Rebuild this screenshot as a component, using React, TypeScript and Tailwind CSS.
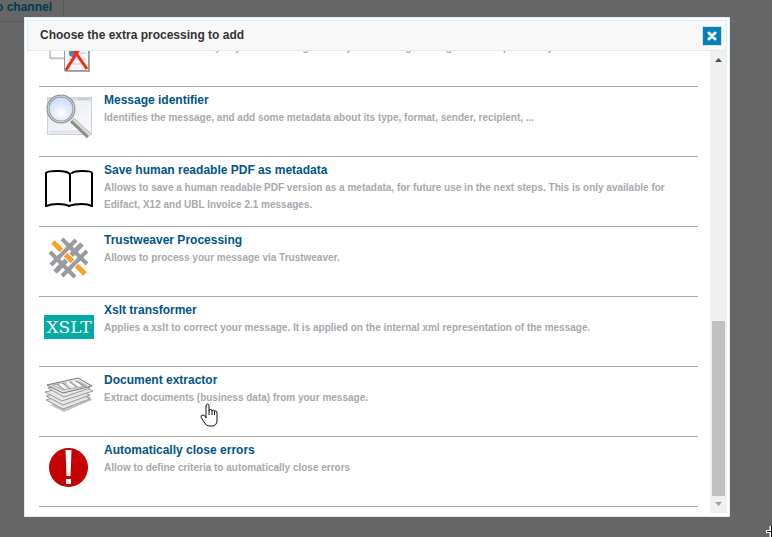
import type { ReactNode } from 'react';

type Item = { id: string; title?: string; text: string; icon: ReactNode };

const RemoveIcon = () => (
  <svg width="50" height="50" viewBox="0 0 50 50" aria-hidden="true">
    <rect x="6" y="8" width="26" height="28" fill="#fff" stroke="#999" />
    <path d="M6 37h14" stroke="#ccc" />
    <rect x="21" y="18" width="25" height="32" fill="#aaa" />
    <rect x="20.500" y="17.500" width="24" height="31" fill="#f8f8fc" stroke="#999" />
    <circle cx="29" cy="31" r="4" fill="#4f81b5" />
    <path d="M36 31h6M25 37h16M25 42h16" stroke="#b8c8dd" />
    <path d="M23 18L43 47M41 18L22 48" stroke="#f82a0c" strokeWidth="3" />
  </svg>
);

const MagnifierIcon = () => (
  <svg width="50" height="50" viewBox="0 0 50 50" aria-hidden="true">
    <defs>
      <radialGradient id="lens" cx="50%" cy="65%">
        <stop offset="0" stopColor="#ffffff" />
        <stop offset="1" stopColor="#cfdffb" />
      </radialGradient>
      <linearGradient id="pane" x2="1" y2="1">
        <stop offset="0" stopColor="#e3e8ed" />
        <stop offset="1" stopColor="#fafbfc" />
      </linearGradient>
    </defs>
    <rect x="3.500" y="5.500" width="44" height="37" fill="url(#pane)" stroke="#cbd1d6" />
    <path d="M4 7h43" stroke="#d3dae2" strokeWidth="3" />
    <path d="M34 7h12" stroke="#a8b4c2" strokeDasharray="3 1" />
    <path d="M5 40h41" stroke="#dfe4e8" strokeWidth="3" />
    <path d="M28 28L45 44" stroke="#8d8d8d" strokeWidth="6" />
    <path d="M29 27L46 43" stroke="#d8d8d8" strokeWidth="3" />
    <circle cx="17" cy="17" r="13" fill="url(#lens)" stroke="#929292" strokeWidth="3" />
    <circle cx="17" cy="17" r="13" fill="none" stroke="#d8d8d8" />
  </svg>
);

const BookIcon = () => (
  <svg width="50" height="50" viewBox="0 0 50 50" fill="none" stroke="#000" strokeWidth="2" strokeLinecap="round" strokeLinejoin="round" aria-hidden="true">
    <path d="M2 44V11Q3 9 14 9Q23 9 26 12V39M28 11Q30 9 38 9Q48 9 48 11V44" />
    <path d="M2 44Q7 42 14 42Q21 42 25 44Q30 42 38 42Q44 42 48 44" />
  </svg>
);

const WeaveIcon = () => (
  <svg width="50" height="50" viewBox="0 0 50 50" fill="none" strokeWidth="4" aria-hidden="true">
    <g stroke="#999b9f">
      <path d="M18 7L43 32M6 20L31 45" />
      <path d="M32 8L7 33M43 19L18 44" />
    </g>
    <path d="M38 12L11 40" stroke="#999b9f" strokeWidth="5" />
    <path d="M18 19L31 32" stroke="#fff" strokeWidth="7" />
    <path d="M9 10L41 42" stroke="#fb9f26" strokeWidth="5" />
    <path d="M16 24L23 17M27 35L34 28" stroke="#fff" strokeWidth="6" />
    <path d="M14 26L25 15M25 37L36 26" stroke="#999b9f" strokeWidth="4" />
    <path d="M27 16L33 22M15 29L20 34" stroke="#999b9f" strokeWidth="4" />
  </svg>
);

const XsltIcon = () => (
  <div className="flex h-6 w-[50px] items-center justify-center overflow-hidden bg-[#02aba3] font-['DejaVu_Serif',serif] text-[17px] leading-6 text-white">
    XSLT
  </div>
);

const PapersIcon = () => (
  <svg width="50" height="50" viewBox="0 0 50 50" strokeLinejoin="round" aria-hidden="true">
    <path d="M6 33L20 40L48 28L44 22Z" fill="#c5c5c5" />
    <g fill="#e6e6e6" stroke="#999">
      <path d="M2 28L19 37L46 27L33 19Z" />
      <path d="M2 24L19 33L46 23L32 16Z" />
      <path d="M1 20L18 29L49 19L34 12Z" />
      <path d="M4 16L20 25L46 16L34 9Z" />
      <path d="M3 13L19 21L48 14L34 6Z" stroke="#777" />
    </g>
    <path d="M8 13L19 18L43 14L33 9Z" fill="#dcdcdc" stroke="#aaa" />
    <path d="M13 12l8 6M19 11l7 6M26 10l7 5M32 9l8 5" stroke="#888" fill="none" />
    <path d="M16 12l6 5M23 10l6 5M29 9l7 5" stroke="#fff" strokeWidth="2" fill="none" />
  </svg>
);

const ErrorIcon = () => (
  <svg width="50" height="50" viewBox="0 0 50 50" aria-hidden="true">
    <circle cx="24.500" cy="25.500" r="19.500" fill="#c50000" />
    <path d="M21.500 8h6l-1 26h-4zM22 37h5v5h-5z" fill="#fff" />
  </svg>
);

const items: Item[] = [
  {
    id: 'remove',
    text: 'Eliminates automatically any other message already considering missing data from previously',
    icon: <RemoveIcon />,
  },
  {
    id: 'identifier',
    title: 'Message identifier',
    text: 'Identifies the message, and add some metadata about its type, format, sender, recipient, ...',
    icon: <MagnifierIcon />,
  },
  {
    id: 'pdf',
    title: 'Save human readable PDF as metadata',
    text: 'Allows to save a human readable PDF version as a metadata, for future use in the next steps. This is only available for Edifact, X12 and UBL Invoice 2.1 messages.',
    icon: <BookIcon />,
  },
  {
    id: 'trustweaver',
    title: 'Trustweaver Processing',
    text: 'Allows to process your message via Trustweaver.',
    icon: <WeaveIcon />,
  },
  {
    id: 'xslt',
    title: 'Xslt transformer',
    text: 'Applies a xslt to correct your message. It is applied on the internal xml representation of the message.',
    icon: <XsltIcon />,
  },
  {
    id: 'extractor',
    title: 'Document extractor',
    text: 'Extract documents (business data) from your message.',
    icon: <PapersIcon />,
  },
  {
    id: 'errors',
    title: 'Automatically close errors',
    text: 'Allow to define criteria to automatically close errors',
    icon: <ErrorIcon />,
  },
];

function Row({ title, text, icon }: Item) {
  return (
    <li className="flex h-[70px] shrink-0 gap-[10px] border-b border-[#a9a9ae] pl-[5px]">
      <div className="flex h-[60px] w-[50px] shrink-0 items-center">{icon}</div>
      <div className="min-w-0 flex-1 pt-1">
        <h3 className="h-[18px] text-xs leading-[18px] font-bold text-[#00558a]">{title}</h3>
        <p className="text-[10px] leading-[17px] font-bold text-[#a7a9ad]">{text}</p>
      </div>
    </li>
  );
}

export default function App() {
  return (
    <div className="relative h-screen overflow-hidden bg-[#666] font-['Liberation_Sans',Arial,sans-serif]">
      <div className="absolute top-0 left-0 flex h-[22px] w-16 justify-end border-r border-b border-[#5b5b5b] pr-[11px] text-xs leading-[14px] font-bold whitespace-nowrap text-[#033c58]">
        o channel
      </div>
      <div className="relative flex h-full pt-[17px] pr-[42px] pb-5 pl-6">
        <section
          role="dialog"
          aria-labelledby="dialog-title"
          className="flex min-w-0 flex-1 flex-col border border-[#d9ecf8] bg-white p-[2px]"
        >
          <header className="flex h-[31px] shrink-0 items-center justify-between border border-[#d9ecf8] bg-[#f8f8f8] pr-1 pl-3">
            <h2 id="dialog-title" className="pb-[2px] text-xs font-bold text-[#333]">
              Choose the extra processing to add
            </h2>
            <button
              type="button"
              aria-label="Close"
              className="flex size-5 items-center justify-center border border-[#ddd] bg-[#0480ba]"
            >
              <svg width="10" height="10" viewBox="0 0 10 10" stroke="#fff" strokeWidth="3" strokeLinecap="round">
                <path d="M2 2L8 8M8 2L2 8" />
              </svg>
            </button>
          </header>
          <div className="flex min-h-0 flex-1 pb-[1px]">
            <ul className="mr-3 ml-3 flex min-w-0 flex-1 flex-col justify-end overflow-hidden pb-[6px]">
              {items.map((item) => (
                <Row key={item.id} {...item} />
              ))}
            </ul>
            <div className="flex w-[17px] shrink-0 flex-col items-center bg-[#f0f0f0]" aria-hidden="true">
              <svg width="17" height="17" viewBox="0 0 17 17" fill="#505050">
                <path d="M5 11L8.500 7L12 11Z" />
              </svg>
              <div className="flex-1" />
              <div className="h-[175px] w-[13px] bg-[#c1c1c1]" />
              <svg width="17" height="17" viewBox="0 0 17 17" fill="#a3a3a3">
                <path d="M5 6L8.500 10L12 6Z" />
              </svg>
            </div>
          </div>
        </section>
      </div>
      <svg className="absolute top-[403px] left-[200px]" width="18" height="25" viewBox="0 0 18 25" aria-hidden="true">
        <path
          d="M6 15V3Q6 1 7.500 1T9 3V8Q9 6.500 10.500 6.500T12 8Q12 7 13.300 7T14.500 9Q14.500 8 15.800 8T17 10V17Q17 23 12 23H9Q6 23 4 19L1 14Q1 12 3 12T6 15M9 8V12M12 8V12M14.500 9V12"
          fill="#fff"
          stroke="#111"
        />
      </svg>
      <svg className="absolute right-0 bottom-0" width="6" height="11" viewBox="0 0 6 11" aria-hidden="true">
        <path d="M5 0V11M0 5.500H6" stroke="#fff" strokeWidth="3" />
        <path d="M5.500 0V11M1 5.500H6" stroke="#000" />
      </svg>
    </div>
  );
}
